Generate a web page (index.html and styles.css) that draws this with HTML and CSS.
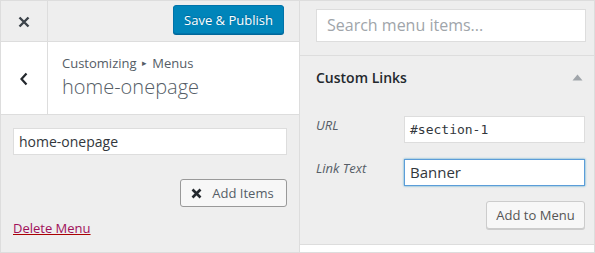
FILE: index.html
```html
<!DOCTYPE html>
<html>
<head>
<meta charset="utf-8">
<link rel="stylesheet" href="styles.css">
</head>
<body>
<div class="frame">
  <div class="left">
    <div class="topbar">
      <div class="close">
        <svg width="12" height="12" viewBox="0 0 12 12"><path d="M1.5 1.5 L10.5 10.5 M10.5 1.5 L1.5 10.5" stroke="#3c434a" stroke-width="2.4" stroke-linecap="butt"/></svg>
      </div>
      <div class="topbar-main">
        <button class="btn-primary">Save &amp; Publish</button>
      </div>
    </div>
    <div class="header">
      <div class="back">
        <svg width="10" height="14" viewBox="0 0 10 14"><path d="M7.5 1.5 L2.5 7 L7.5 12.5" stroke="#23282d" stroke-width="2.2" fill="none"/></svg>
      </div>
      <div class="titles">
        <div class="crumb">Customizing <span class="tri">▸</span> Menus</div>
        <div class="title">home-onepage</div>
      </div>
    </div>
    <div class="body">
      <div class="input name-input">home-onepage</div>
      <div class="row-end">
        <button class="btn add-items">
          <svg width="11" height="11" viewBox="0 0 11 11"><path d="M1.5 1.5 L9.5 9.5 M9.5 1.5 L1.5 9.5" stroke="#23282d" stroke-width="2.6"/></svg>
          <span>Add Items</span>
        </button>
      </div>
      <a class="delete" href="#">Delete Menu</a>
    </div>
  </div>
  <div class="right">
    <div class="search-wrap">
      <div class="input search">Search menu items...</div>
    </div>
    <div class="section">
      <div class="section-head">
        <span class="section-title">Custom Links</span>
        <svg width="11" height="7" viewBox="0 0 11 7"><path d="M5.5 0.5 L10.5 6.5 L0.5 6.5 Z" fill="#a0a5aa"/></svg>
      </div>
      <div class="field">
        <label>URL</label>
        <div class="input mono">#section-1</div>
      </div>
      <div class="field">
        <label>Link Text</label>
        <div class="input focus">Banner</div>
      </div>
      <div class="row-end">
        <button class="btn add-menu">Add to Menu</button>
      </div>
    </div>
    <div class="next"></div>
  </div>
</div>
</body>
</html>
```
FILE: styles.css
```css
* { box-sizing: border-box; }
html, body { margin: 0; padding: 0; }
body {
  font-family: "Open Sans", "Liberation Sans", sans-serif;
  font-size: 13px;
  color: #555d66;
  background: #fff;
}
.frame {
  width: 595px;
  height: 253px;
  border: 1px solid #ddd;
  display: flex;
  background: #eee;
  overflow: hidden;
}
.left {
  width: 299px;
  border-right: 1px solid #ddd;
  display: flex;
  flex-direction: column;
  background: #eee;
}
.topbar {
  height: 41px;
  display: flex;
  border-bottom: 1px solid #ddd;
}
.close {
  width: 47px;
  border-right: 1px solid #ddd;
  display: flex;
  align-items: center;
  justify-content: center;
  padding-top: 1px;
}
.topbar-main {
  flex: 1;
  display: flex;
  justify-content: flex-end;
  align-items: flex-start;
  padding: 4px 15px 0 0;
}
.btn-primary {
  font-family: inherit;
  height: 29px;
  width: 111px;
  padding: 0;
  font-size: 13px;
  color: #fff;
  background: #0085ba;
  border: 1px solid #0073aa;
  border-radius: 3px;
  box-shadow: 0 1px 0 #006799;
  text-shadow: 0 -1px 1px #006799;
}
.header {
  height: 73px;
  display: flex;
  background: #fff;
  border-bottom: 1px solid #ddd;
}
.back {
  width: 47px;
  border-right: 1px solid #ddd;
  display: flex;
  align-items: center;
  justify-content: center;
  padding-top: 2px;
}
.titles {
  padding: 12px 0 0 14px;
}
.crumb {
  font-size: 13px;
  line-height: 18px;
  color: #555d66;
}
.tri { font-size: 9px; position: relative; top: -2px; margin: 0 2px; }
.title {
  font-size: 20px;
  font-weight: 300;
  line-height: 26px;
  color: #555d66;
}
.body {
  padding: 13px 12px 0 12px;
}
.input {
  height: 27px;
  background: #fff;
  border: 1px solid #ddd;
  font-size: 14px;
  line-height: 25px;
  padding: 0 5px;
  color: #32373c;
}
.row-end {
  display: flex;
  justify-content: flex-end;
}
.body .row-end { margin-top: 24px; }
.btn {
  font-family: inherit;
  font-size: 13px;
  color: #555;
  background: #f7f7f7;
  border-radius: 3px;
  padding: 0;
}
.add-items {
  width: 107px;
  height: 28px;
  border: 1px solid #999;
  display: flex;
  align-items: center;
  justify-content: center;
  gap: 10px;
  color: #555d66;
  padding-right: 2px;
}
.delete {
  display: inline-block;
  margin-top: 12px;
  color: #a0105a;
  font-size: 13px;
  text-decoration: underline;
  text-decoration-color: #a00;
}
.right {
  flex: 1;
  display: flex;
  flex-direction: column;
}
.search-wrap {
  padding: 8px 8px 13px 16px;
  border-bottom: 1px solid #ddd;
}
.search {
  height: 33px;
  line-height: 31px;
  color: #a0a5aa;
  font-size: 16px;
  padding: 0 10px;
}
.section {
  padding: 0 9px 15px 16px;
  border-bottom: 1px solid #ddd;
}
.section-head {
  height: 43px;
  display: flex;
  align-items: center;
  justify-content: space-between;
  padding-right: 2px;
}
.section-title {
  font-weight: 600;
  font-size: 14px;
  color: #23282d;
}
.field {
  display: flex;
  align-items: flex-start;
  margin-top: 17px;
}
.field + .field { margin-top: 16px; }
.field label {
  width: 88px;
  font-style: italic;
  font-size: 13px;
  line-height: 18px;
  color: #555d66;
}
.field .input { flex: 1; }
.mono {
  font-family: "DejaVu Sans Mono", "Liberation Mono", monospace;
  font-size: 13px;
  color: #32373c;
}
.focus {
  border-color: #5b9dd9;
  box-shadow: 0 0 2px rgba(30,140,190,.8);
  font-size: 15px;
}
.section .row-end { margin-top: 15px; }
.add-menu {
  width: 99px;
  height: 28px;
  border: 1px solid #ccc;
  box-shadow: 0 1px 0 #ccc;
  color: #555;
}
.next {
  flex: 1;
  background: #fff;
}
```
